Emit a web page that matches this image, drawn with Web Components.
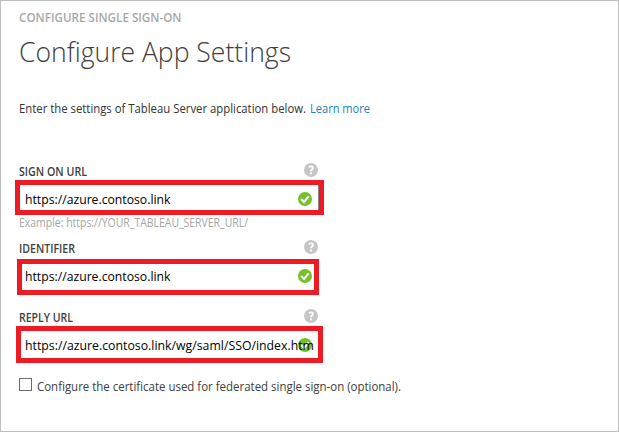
<!DOCTYPE html>
<html lang="en">
<head>
<meta charset="utf-8">
<title>Configure App Settings</title>
<style>
html,body{margin:0;height:100%;background:#fff;overflow:hidden}
body{font-family:"Open Sans","Noto Sans",sans-serif}
</style>
</head>
<body>
<settings-page></settings-page>
<script>
function define(name, html, setup) {
  const template = document.createElement('template');
  template.innerHTML = html;
  customElements.define(name, class extends HTMLElement {
    connectedCallback() {
      if (this.shadowRoot) return;
      this.attachShadow({mode: 'open'}).append(template.content.cloneNode(true));
      if (setup) setup(this, this.shadowRoot);
    }
  });
}

// A single line of text condensed or widened to a set width.
define('text-run', `<style>
:host{display:block;flex:none;height:var(--row,16px);line-height:var(--line,18px);white-space:nowrap}
span{display:inline-block;transform-origin:0 50%;vertical-align:top}
</style><span><slot></slot></span>`, (host, root) => {
  const width = Number(host.getAttribute('width'));
  host.style.width = width + 'px';
  const span = root.querySelector('span');
  span.style.transform = `scaleX(${width / span.getBoundingClientRect().width})`;
});

define('help-icon', `<style>:host{display:block;width:14px;height:14px}svg{display:block}</style>
<svg width="14" height="14" viewBox="0 0 14 14"><circle cx="7" cy="7" r="7" fill="#c6c6c6"/>
<path d="M4.8 4.1Q6.8 2.9 8.3 3.6Q9.4 4.4 8.7 5.7Q8.2 6.4 7.5 6.9Q7 7.3 7 8.3" fill="none" stroke="#fff" stroke-width="1.9"/><circle cx="7" cy="10.4" r="1.15" fill="#fff"/></svg>`);

define('valid-icon', `<style>:host{display:block;width:14px;height:14px}svg{display:block}</style>
<svg width="14" height="14" viewBox="0 0 14 14"><circle cx="7" cy="7" r="7" fill="#77c02d"/>
<path d="M3.1 7.1L6 10L10.7 4.3" fill="none" stroke="#fff" stroke-width="2.1"/></svg>`);

define('url-field', `<style>
:host{display:block}
.label{display:flex;justify-content:space-between;width:299px;margin-left:19px;height:var(--label-height,17px);font-size:12.5px;font-weight:600;color:#404040}
.box{--line:16px;position:relative;box-sizing:border-box;width:var(--w);height:var(--h);margin-left:var(--x);border:5px solid #ed1c24;padding:var(--pad) 0 0 calc(20px - var(--x));font-size:13px;color:#000;background:#fff}
.box ::slotted(text-run){--line:16px;position:relative;z-index:1}
valid-icon{position:absolute;top:calc(var(--pad) + 1px);left:calc(293px - var(--x))}
.edge{display:none}
:host([edge]) .edge{display:block;position:absolute;right:0;top:0;bottom:0;width:1px;background:#858585}
help-icon{margin-left:auto}
</style>
<div class="label"><slot name="label"></slot><help-icon></help-icon></div>
<div class="box"><slot></slot><valid-icon></valid-icon><i class="edge"></i></div>
<slot name="hint"></slot>`);

define('check-option', `<style>
:host{display:flex;gap:5px;margin-left:19px;font-size:12.5px;color:#404040}
i{box-sizing:border-box;width:13px;height:13px;border:1px solid #6b6b6b;background:#fff}
</style><i></i><slot></slot>`);

define('settings-page', `<style>
:host{display:block;box-sizing:border-box;width:619px;height:432px;border:1px solid #bfbfbf;background:#fff}
main{display:flex;flex-direction:column;margin-left:-1px;padding-top:8px}
.eyebrow{margin-left:19px;font-size:12.5px;font-weight:600;color:#a8a8a8}
.title{--line:36px;--row:36px;margin:9px 0 30px 19px;font-size:27px;font-weight:300;color:#404040}
.intro{display:flex;gap:4px;margin:0 0 47px 19px;font-size:12.5px;color:#333}
.link{color:#1683bd}
.hint{margin:-1px 0 0 19px;font-size:12.5px;color:#a5a5a5}
.one{--x:15px;--w:309px;--h:35px;--pad:6px}
.two{--x:17px;--w:302px;--h:36px;--pad:4px;--label-height:19px;margin-top:10px}
.three{--x:16px;--w:307px;--h:37px;--pad:6px;margin-top:14px}
check-option{margin-top:15px}
</style>
<main>
<text-run class="eyebrow" width="162.5">CONFIGURE SINGLE SIGN-ON</text-run>
<text-run class="title" width="272">Configure App Settings</text-run>
<div class="intro"><text-run width="287">Enter the settings of Tableau Server application below.</text-run><text-run class="link" width="60">Learn more</text-run></div>
<url-field class="one" edge><text-run slot="label" width="68">SIGN ON URL</text-run><text-run width="145.5">https://azure.contoso.link</text-run><text-run class="hint" slot="hint" width="229">Example: https://YOUR_TABLEAU_SERVER_URL/</text-run></url-field>
<url-field class="two"><text-run slot="label" width="56">IDENTIFIER</text-run><text-run width="145.5">https://azure.contoso.link</text-run></url-field>
<url-field class="three"><text-run slot="label" width="54">REPLY URL</text-run><text-run width="289">https://azure.contoso.link/wg/saml/SSO/index.htm</text-run></url-field>
<check-option><text-run width="364">Configure the certificate used for federated single sign-on (optional).</text-run></check-option>
</main>`);
</script>
</body>
</html>
